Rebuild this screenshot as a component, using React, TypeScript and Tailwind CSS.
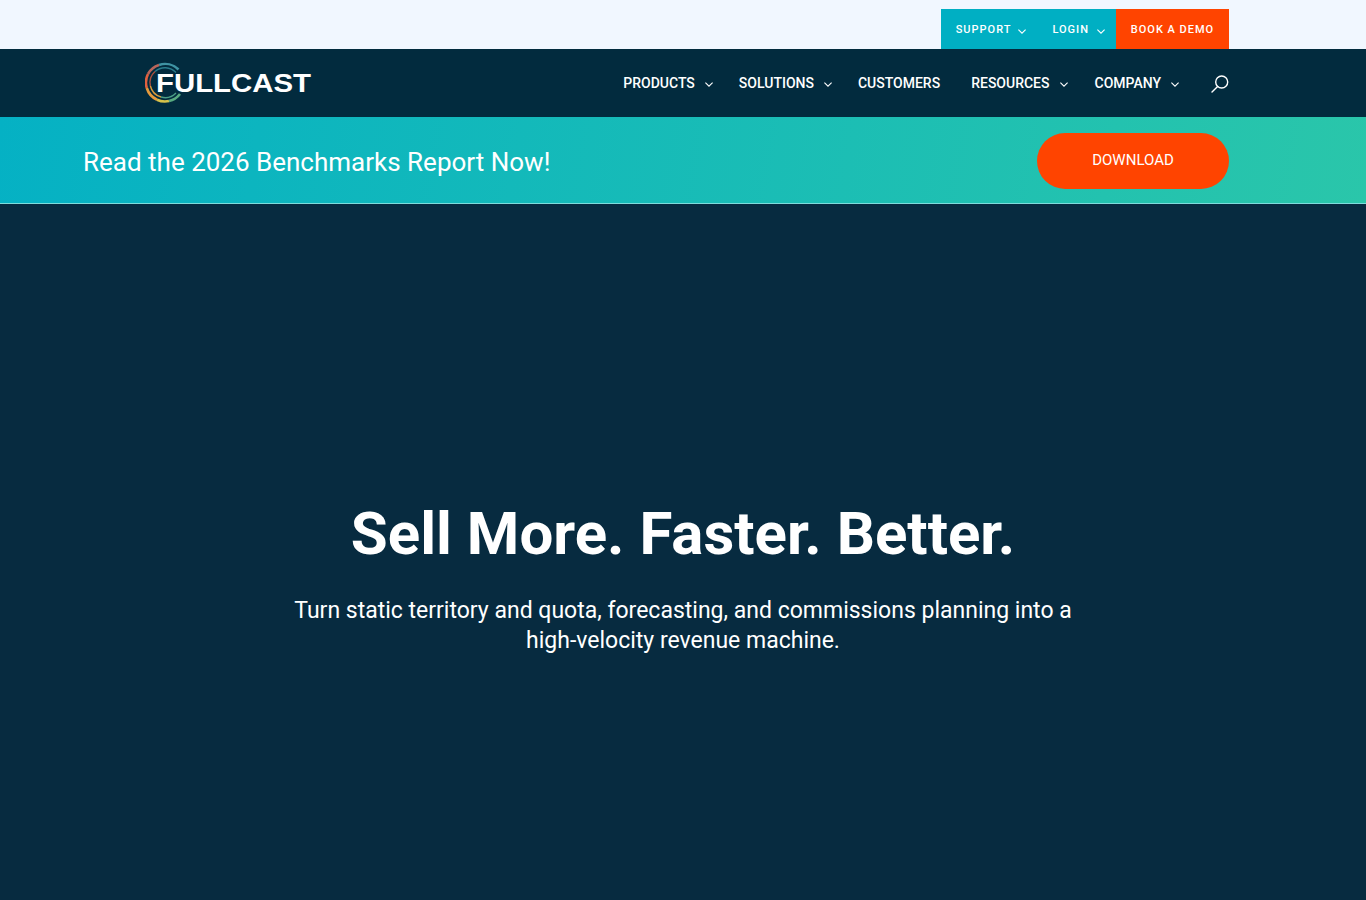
const font = { fontFamily: "Roboto, sans-serif" };

const navItems = [
  { label: "PRODUCTS", caret: true, gap: "mr-[26px]" },
  { label: "SOLUTIONS", caret: true, gap: "mr-[26px]" },
  { label: "CUSTOMERS", caret: false, gap: "mr-[31px]" },
  { label: "RESOURCES", caret: true, gap: "mr-[27px]" },
  { label: "COMPANY", caret: true, gap: "mr-[32px]" },
];

function Caret({ className }: { className?: string }) {
  return (
    <svg width="8" height="5" viewBox="0 0 8 5" fill="none" stroke="currentColor" strokeWidth="1.1" className={className}>
      <path d="M0.4 0.6 L4 4.2 L7.6 0.6" />
    </svg>
  );
}

function Logo() {
  return (
    <div className="relative w-[168px] h-[42px]">
      <svg width="40" height="42" viewBox="0 0 40 42" className="absolute left-[1px] top-0" fill="none">
        <path d="M33.5 7.5 A19 19 0 0 0 14 3" stroke="#3f93a3" strokeWidth="2.6" />
        <path d="M14 3 A19 19 0 0 0 3 12" stroke="#b8655a" strokeWidth="2.6" />
        <path d="M3 12 A19 19 0 0 0 1.8 26" stroke="#e0603f" strokeWidth="2.6" />
        <path d="M1.8 26 A19 19 0 0 0 12 37.7" stroke="#e59a3c" strokeWidth="2.6" />
        <path d="M12 37.7 A19 19 0 0 0 24 39" stroke="#d6c24a" strokeWidth="2.6" />
        <path d="M24 39 A19 19 0 0 0 35 32" stroke="#58ab80" strokeWidth="2.6" />
        <path d="M31 10.5 A15 15 0 0 0 10 9.5" stroke="#2b7d8d" strokeWidth="1.4" />
        <path d="M10 9.5 A15 15 0 0 0 5.4 24" stroke="#a8503f" strokeWidth="1.4" />
        <path d="M5.4 24 A15 15 0 0 0 16 35" stroke="#d89a3c" strokeWidth="1.4" />
        <path d="M16 35 A15 15 0 0 0 31 31" stroke="#4a9c85" strokeWidth="1.4" />
      </svg>
      <span
        className="absolute left-[12px] top-[7px] text-[26px] leading-[28px] font-bold text-white scale-x-[1.13] origin-left"
        style={{ fontFamily: "'Liberation Sans', sans-serif" }}
      >
        FULLCAST
      </span>
    </div>
  );
}

function SearchIcon() {
  return (
    <svg width="18" height="18" viewBox="0 0 18 18" fill="none" stroke="white" strokeWidth="1.4" className="mt-[2px]">
      <circle cx="10.7" cy="7" r="6" />
      <path d="M6.6 11.5 L1 17" strokeLinecap="round" />
    </svg>
  );
}

export default function App() {
  return (
    <div className="min-h-[900px] bg-[#072b40] overflow-hidden" style={font}>
      <div className="h-[49px] bg-[#f1f7ff] flex justify-end items-end pr-[137px]">
        <div className="h-[40px] pt-[2px] flex items-center bg-[#00afc3] text-white text-[11px] font-medium tracking-[1px]">
          <a className="pl-[15px] flex items-center">
            SUPPORT <Caret className="ml-[7px] mt-[2px]" />
          </a>
          <a className="pl-[26px] pr-[11px] flex items-center">
            LOGIN <Caret className="ml-[8px] mt-[2px]" />
          </a>
        </div>
        <a className="h-[40px] w-[113px] pt-[2px] flex items-center justify-center bg-[#ff4400] text-white text-[11px] font-medium tracking-[1px]">
          BOOK A DEMO
        </a>
      </div>

      <div className="h-[68px] bg-[#022b3e] flex items-center justify-between pl-[144px] pr-[137px]">
        <Logo />
        <div className="flex items-center">
          {navItems.map((item) => (
            <a key={item.label} className={`flex items-center text-white text-[14px] font-medium pt-[1px] ${item.gap}`}>
              {item.label}
              {item.caret && <Caret className="ml-[10px] mt-[2px]" />}
            </a>
          ))}
          <SearchIcon />
        </div>
      </div>

      <div className="h-[87px] border-b border-[#7fdcdc] bg-[linear-gradient(100deg,#05b1c4,#2ac6aa)] flex items-center justify-between pl-[83px] pr-[137px]">
        <p className="text-white text-[26px] leading-[30px] mt-[3px]">Read the 2026 Benchmarks Report Now!</p>
        <a className="w-[192px] h-[56px] mt-[2px] pb-[2px] rounded-full bg-[#ff4400] text-white text-[15px] flex items-center justify-center">
          DOWNLOAD
        </a>
      </div>

      <div className="pt-[295px] flex flex-col items-center text-white">
        <h1 className="text-[60px] leading-[70px] font-bold">Sell More. Faster. Better.</h1>
        <p className="mt-[27px] w-[800px] text-center text-[23px] leading-[30px]">
          Turn static territory and quota, forecasting, and commissions planning into a high-velocity revenue machine.
        </p>
      </div>
    </div>
  );
}
